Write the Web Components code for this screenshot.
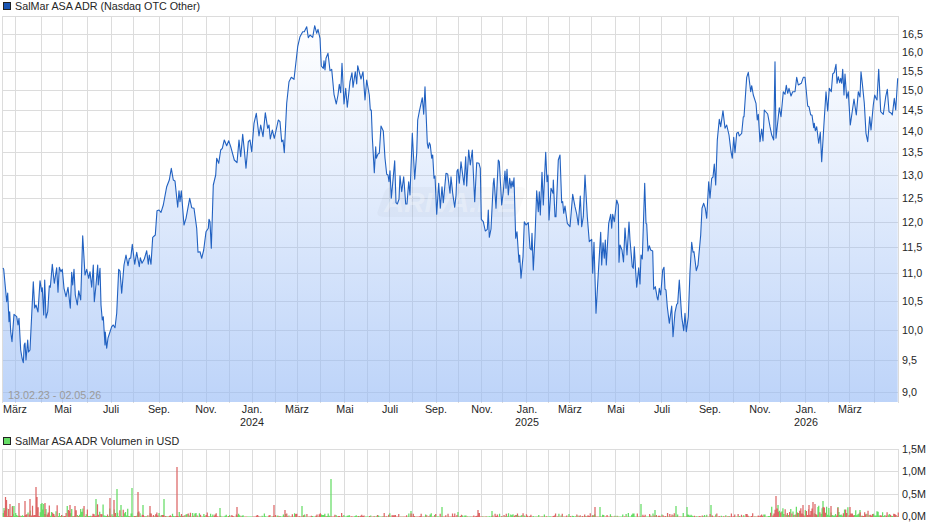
<!DOCTYPE html>
<html lang="de">
<head>
<meta charset="utf-8">
<title>SalMar ASA ADR</title>
<style>
html,body{margin:0;padding:0;background:#fff}
body{font:10.76px/13px "Liberation Sans",Arial,sans-serif;color:#262626}
</style>
</head>
<body>
<stock-chart></stock-chart>
<script>
const GRID_X=[2,15,41,62,87,111,133,159,182,206,229,252,275,297,320,344,367,389,412,436,458,481,502,526,548,569,591,615,639,661,686,709,733,759,780,805,828,849,874,898];
const PRICE_Y=[[34,'16,5'],[52,'16,0'],[71,'15,5'],[90,'15,0'],[110,'14,5'],[131,'14,0'],[152,'13,5'],[175,'13,0'],[198,'12,5'],[222,'12,0'],[247,'11,5'],[273,'11,0'],[301,'10,5'],[330,'10,0'],[360,'9,5'],[392,'9,0']];
const VOL_Y=[[449,'1,5M'],[471,'1,0M'],[494,'0,5M'],[516,'0,0M']];
const MONTHS=[[15,'März'],[63,'Mai'],[111,'Juli'],[159,'Sep.'],[206,'Nov.'],[252,'Jan.','2024'],[297,'März'],[345,'Mai'],[390,'Juli'],[436,'Sep.'],[482,'Nov.'],[527,'Jan.','2025'],[570,'März'],[616,'Mai'],[662,'Juli'],[710,'Sep.'],[760,'Nov.'],[806,'Jan.','2026'],[850,'März']];
const LINE="3,268 3.7,269.3 6.7,301.7 7.7,293 9,321.7 9.7,311.7 10.7,331.7 12,341.7 14,314.3 16.7,316.7 18,325 19,318.3 20.7,350 22,358 23.3,362.7 24.2,345 25,343 26,360 27.7,340 28.5,352 30,350 33.3,281.7 34.7,308 36,305 38,312 40,280.7 41.7,291.7 42.3,287.7 43.7,315 44.7,280 46,318 47.7,311.7 49.3,285.7 50.3,287.3 52.3,264.3 54.3,283.3 56.7,267.7 58,292.3 59.3,267.3 61,271.7 62.3,269.3 64,288.3 66,296.7 68,287.3 70.3,308.3 71.7,272.3 72.7,285 74,269.3 75.3,295 77.3,305 78.7,290.7 80.7,300 82.7,235.7 85,275 86.7,269.3 88.7,278.3 90,271.7 91.7,287.3 93.3,265 94.3,301.7 96,285 97.7,265 98.3,285 100,268.3 101,305 102.3,320 103.3,316.7 105,345 105.3,332 106.7,348.3 108,338 111.7,326.7 113.3,325 115,327.7 116.7,313.3 118.7,269.3 120,271 121.7,293.3 124,265 126,255 128,265.7 129.3,258.3 130.7,258.3 132.3,244.3 134.7,264.3 136.7,252.3 139.3,266.7 140.3,257.7 142,263.3 144.3,259 146.7,250.7 148.3,264.3 149.3,255 151,264.3 152.7,237.3 155.3,235 157,210.7 159,210 161,212.3 163.3,205 166.7,186.7 169.3,180 171.3,168.3 173.3,180 175,181 177.7,207.3 179,190.7 180,201.7 181.3,190.7 184,225 186,218.3 189.7,198.3 191.7,207.7 194,208.3 196.7,228.3 198,252.3 200,251.7 201.7,258.3 203.7,250 206,231.7 208.3,228.3 209,219.3 210,221.7 211.3,248.3 213.3,185 215.7,175 216.7,158.3 218.7,163.3 220.7,150 222.3,148.3 224.3,140 226.7,145.7 228.7,140.7 230.7,146.7 234.3,160 237,162.7 239,140 240.7,156.7 242.7,134.3 244.3,150 246,168.3 248.3,141.7 250,140 251.7,151.7 254,123.3 256.3,113.3 259,136 260.7,125 263,136.7 265.3,112.7 267.7,128.3 269,125 270.3,139 272.3,130 274.3,138.3 278.3,120 280,121.7 281.7,141.7 283,140 284.3,152.7 286.7,103.3 289,81.7 291.3,77.3 294,79.3 297.7,46.7 300,36.7 302.7,31.7 304.3,31.7 306.7,26.7 308.3,37.7 310,35 312.7,37.3 314.7,25.7 316.7,33.3 318,29.3 320,38.3 321.3,66 323.3,68.3 324,60.7 325,70 326,58.3 328,53.3 330,70.7 331.7,69.3 334,94.3 336.3,104 338,95 339.3,84.3 340.7,92.7 342,63.3 344,104 345.7,88.3 347.3,107.3 350,81.7 352,72.7 353,87.3 355.3,71.7 356.7,84 357.7,65.7 361,79 363,71.7 365,100 366.7,80 369.3,95 370.3,110 371.3,110 372.3,136.7 374.3,172.7 375.7,146.7 376.3,158.3 378,154 379.3,153.3 381,126 383.3,131 385,158.3 386.7,174.3 388,175 389,181.7 390,170.7 391.3,198.3 392.7,183.3 394.7,160.7 396,202.7 397.3,204 399,199.3 400,175.7 401.7,191.7 403.7,176.7 405.7,204 407,204 408.7,181.7 410,195 412.3,133.3 414.7,179.3 416.7,153.3 417.7,120 419.3,111.7 422.3,97.7 423.7,114.3 425,86.7 427.3,143.3 428.3,148.3 429.3,142.7 430.3,145 431.7,158.3 432.7,155 434,178.3 435,176 436.7,214.3 438.7,183.3 440.3,208.3 442,186.7 443.3,202.7 446,173.3 447.7,174 450,193.3 451,176.7 452.7,193.3 454.7,207.3 456,195.7 457,171 458,169.3 459.3,183.3 461,161.7 464,185 465.7,156.7 466.7,186 468.7,150 470.3,165 472.3,150 474.7,201.7 476.7,162.7 479,163.3 480.3,168.3 481.3,219.3 483.3,221.7 485.3,231 487.3,229.3 488.3,210 489.3,237.3 491,229 493.3,183.3 494,178.3 496,208.3 498.3,160 499.3,161.7 501.7,205 503.3,191.7 505,171 506,188.3 507,169.3 508.3,195 509.7,178.3 511,188.3 512,181 513,186.7 514,177.7 515.7,238.3 517,231.7 519,262.3 519.7,255 521,278.3 523,256.7 524.3,221.7 526,225 528.3,222.7 530,248.3 531.3,250 532,233.3 533.3,270 535,236.7 536.7,190.7 538.3,211.7 539.3,191.7 540.3,215 542,172.3 543.3,205 545.7,152.3 547,181.7 548,175 549,220 551,188.3 553,193.3 553.3,180 555,216.7 556,216.7 558.3,160 560,155 561.7,202.7 562.7,201.7 563.7,213.3 565,206 567.3,223.3 570,226.7 572.7,194.3 575,206.7 576.7,214 578.3,225 580.3,196 581.7,226.7 583.3,216.7 585,175 587.3,216.7 589.3,241.7 591.7,239.3 592.7,273.3 594,242.3 596,313.3 598.3,273.3 600.7,232.3 601.7,265 603,242.7 604.3,258.3 605.3,240 606.3,265 608.7,223.3 610.7,214.3 611.7,228.3 612.7,214.3 614.3,221.7 616.7,200 618.3,205 619,262.3 620,245 622,250 623.5,262 625,228 627,255 629,222 630,240 631,251.7 632.3,266.7 633.3,268.3 634.3,246.7 635.7,271.7 636.7,287.3 638.7,267.7 640,284 641,255 642.3,259 644.7,183.3 646,223.3 646.7,224 648,251 649.3,245.7 650.7,250 652.7,251 653.7,289.3 655.3,286.7 657.3,298.3 658,300 659.3,288.3 660.7,295 662.7,270 664,267.3 665,289.3 666,290 667.3,306.7 669.3,323.3 671.7,306 673,336.7 675,312.3 676.7,304.3 677.7,303.3 679.3,280 681.7,316.7 683.7,330.7 685,313.3 686.3,331.7 688.3,316.7 690,271.7 691.7,242.3 693,252.3 694,251.7 696.3,270.7 698,265 700.7,235 702,208.3 703.7,203.3 705.3,208.3 706.7,218.3 708.7,181.7 710,198.3 711.7,178.3 713,177 714.3,164 715.7,185 717.3,140 719.3,119.3 720.7,126.7 723,110.7 725,128.3 726.7,125 729,135 731,151.7 732.3,158.3 733.7,137.3 735,152.7 736.7,133.3 738.3,132.3 739.3,136 741.7,133.3 743.3,116.7 744,116.7 746.7,77.3 748.3,72.3 750.7,91.7 751.7,85.7 753.3,95 756,103.3 757.3,120 758.3,114.3 760,141.7 761.7,129 763,141 764.3,110 767.7,114 770,126.7 771.7,135 773.7,140 775,61.7 776,138.3 779.3,107.7 781,116.7 783.3,91.7 785,94.3 786.3,85.3 787.7,93.3 789,88.3 791,96 792.7,91.7 795,91.7 796.7,77.3 798.3,85 801.3,83.3 803.3,77.3 805,77.3 807.7,106 809,106.7 810.7,115 812,115 813.7,127.7 814.3,123.3 815.3,130.7 816.7,126.7 818.7,143.3 820.3,132.3 821.7,161.7 824,123.3 826,91.7 827.7,111 829.3,88.3 831.3,91.7 832.7,74 834.3,72.3 836,64.3 837,83.3 838.3,76.7 839.7,82.7 840.7,78.3 841.7,83.3 842.7,69.3 844,95 845,74 846.7,98.3 848.3,91.7 850.3,125 852.3,111 854,99 856.3,115 858.3,91.7 860,97 861,71.7 862.3,83.3 864.3,103.3 866,133.3 867.7,141.7 869.7,116.7 871,130 873.3,105 874.7,95 876,98.3 877,100 878.7,69.3 880.7,111.7 883.3,114.3 885.7,96.7 887.3,89.3 889,111.7 891.3,113.3 892.3,115 894.3,98.3 895.7,110 897.7,78.3";
const SVG_STYLE=':host{display:block}svg{display:block}';
function gridMarkup(top,bottom,rows){
  let d='';
  for(const x of GRID_X)d+=`M${x+.5} ${top}V${bottom}`;
  for(const y of rows)d+=`M2 ${y+.5}H899`;
  return d;
}
class ChartLegend extends HTMLElement{
  constructor(){super();
    this.attachShadow({mode:'open'}).innerHTML=`<style>
      :host{display:flex;align-items:center;gap:4px;box-sizing:border-box;white-space:nowrap}
      i{display:block;width:6px;height:6px;border:1px solid #222;background:var(--swatch)}
    </style><i></i><slot></slot>`;
  }
}
class PricePlot extends HTMLElement{
  constructor(){super();
    const rows=[16,...PRICE_Y.map(r=>r[0])];
    const Y0=16,ticks=GRID_X.map(x=>`M${x+.5} 402V403`).join('');
    const end=LINE.trim().split(' ').pop().split(',')[0];
    this.attachShadow({mode:'open'}).innerHTML=`<style>${SVG_STYLE}
      text{font-family:"Liberation Sans",Arial,sans-serif}
    </style>
    <svg width="899" height="387" viewBox="0 ${Y0} 899 387">
      <defs><linearGradient id="f" gradientUnits="userSpaceOnUse" x1="0" y1="27" x2="0" y2="402">
        <stop offset="0" stop-color="rgb(150,186,245)" stop-opacity="0"/>
        <stop offset="1" stop-color="rgb(150,186,245)" stop-opacity=".63"/>
      </linearGradient></defs>
      <path d="${gridMarkup(16,402,rows)}${ticks}" fill="none" stroke="#dcdcdc" shape-rendering="crispEdges"/>
      <path d="M3 402L${LINE.replace(/ /g,'L')}L${end} 402Z" fill="url(#f)"/>
      <path d="M388 187H520Q527 187 525 193L519 211Q517 217 510 217H384Q375 217 378 210L384 193Q386 187 392 187Z" fill="#000" fill-opacity=".025"/>
      <text x="450" y="212" text-anchor="middle" font-size="28" font-weight="700" font-style="italic" fill="#fff" fill-opacity=".3" textLength="132" lengthAdjust="spacingAndGlyphs">ARIVA.DE</text>
      <polyline points="${LINE}" fill="none" stroke="#2161c1" stroke-width="1.1" stroke-linejoin="round"/>
      <text x="8" y="399" font-size="10.76" fill="#9b9b9b">13.02.23 - 02.05.26</text>
    </svg>`;
  }
}
class VolumePlot extends HTMLElement{
  constructor(){super();
    let s=20260502;
    const rnd=()=>{s=(s+0x6D2B79F5)|0;let t=Math.imul(s^s>>>15,1|s);t=t+Math.imul(t^t>>>7,61|t)^t;return((t^t>>>14)>>>0)/4294967296};
    const B=517;
    const bars={g:'',r:''};
    const add=(c,x,top)=>{bars[c]+=`M${x} ${B}V${top}`};
    for(let i=0;i<800;i++){
      const x=3.4+i*1.12;
      const k=rnd(),r=rnd();
      let h;
      if(x<130)h=1+k*k*k*12;
      else if(x<215)h=.6+k*k*k*5;
      else if(x<770)h=.5+k*k*k*k*3.5;
      else if(x<850)h=1.5+k*k*10;
      else h=1+k*k*k*6;
      add(r<.5?'g':'r',x.toFixed(2),(B-h).toFixed(1));
    }
    [[5.5,497],[6.5,500],[8.5,509],[10,504],[19,503],[25,501],[30,499],[36,487],[37,497],[45,503],[70,505],[75,506],[110,498],[114,500],[138,492],[150,506],[177,467],[237,507],[274,505],[285,510],[478,510],[595,507],[776,496],[803,505],[809,505],[813,502],[815,504],[831,506],[850,507]].forEach(b=>add('r',b[0],b[1]));
    [[4,508],[12.5,506],[14,506],[41,504],[42,503],[96,499],[117,489],[132,488],[143,505],[164,499],[220,508],[302,506],[331,479],[411,511],[442,507],[458,512],[492,511],[600,507],[641,504],[655,510],[676,506],[687,507],[711,505],[778,505],[823,501],[818,507],[838,507],[860,510]].forEach(b=>add('g',b[0],b[1]));
    this.attachShadow({mode:'open'}).innerHTML=`<style>${SVG_STYLE}</style>
    <svg width="899" height="69" viewBox="0 449 899 69">
      <path d="${gridMarkup(449,517,[449,471,494])}" fill="none" stroke="#dcdcdc" shape-rendering="crispEdges"/>
      <path d="${bars.g}" fill="none" stroke="#66dd66" stroke-width="1.25"/>
      <path d="${bars.r}" fill="none" stroke="#dd6666" stroke-width="1.25"/>
    </svg>`;
  }
}
class YAxis extends HTMLElement{
  constructor(){super();
    this.attachShadow({mode:'open'});
  }
  connectedCallback(){
    const top=+this.getAttribute('top');
    const ticks=this.getAttribute('kind')==='vol'?VOL_Y:PRICE_Y;
    let y=top,h='';
    for(const [p,l] of ticks){h+=`<div class="s" style="height:${p-y}px"></div><div class="t">${l}</div>`;y=p}
    this.shadowRoot.innerHTML=`<style>
      :host{display:flex;flex-direction:column;padding-left:3px}
      .t{height:0;display:flex;align-items:center;white-space:nowrap}
      .s{flex:none}
    </style>${h}`;
  }
}
class XAxis extends HTMLElement{
  constructor(){super();
    let x=0,h='';
    for(const [p,m,yr] of MONTHS){
      h+=`<div class="s" style="width:${p-x}px"></div><div class="t"><div>${m}${yr?'<br>'+yr:''}</div></div>`;x=p;
    }
    this.attachShadow({mode:'open'}).innerHTML=`<style>
      :host{display:flex;height:31px;text-align:center}
      .s{flex:none}
      .t{width:0;display:flex;justify-content:center;white-space:nowrap}
    </style>${h}`;
  }
}
class StockChart extends HTMLElement{
  constructor(){super();
    this.attachShadow({mode:'open'}).innerHTML=`<style>
      :host{display:block;width:940px;height:526px;overflow:hidden}
      .legend{padding-left:3px;--swatch:#1a56b5;height:12px;margin-bottom:4px}
      .legend.vol{height:14px;margin-bottom:1px;--swatch:#66dd66}
      .row{display:grid;grid-template-columns:899px 1fr}
    </style>
    <chart-legend class="legend">SalMar ASA ADR (Nasdaq OTC Other)</chart-legend>
    <div class="row"><price-plot></price-plot><y-axis top="16"></y-axis></div>
    <x-axis></x-axis>
    <chart-legend class="legend vol">SalMar ASA ADR Volumen in USD</chart-legend>
    <div class="row"><volume-plot></volume-plot><y-axis top="449" kind="vol"></y-axis></div>`;
  }
}
customElements.define('chart-legend',ChartLegend);
customElements.define('price-plot',PricePlot);
customElements.define('volume-plot',VolumePlot);
customElements.define('y-axis',YAxis);
customElements.define('x-axis',XAxis);
customElements.define('stock-chart',StockChart);
</script>
</body>
</html>
